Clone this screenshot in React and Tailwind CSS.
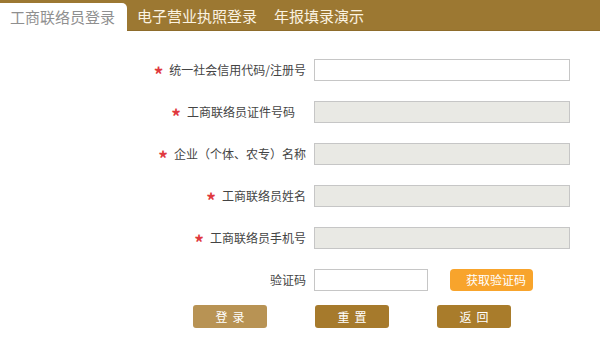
const fields = [
  { label: '统一社会信用代码/注册号', disabled: false, pad: '' },
  { label: '工商联络员证件号码', disabled: true, pad: 'pr-[11px]' },
  { label: '企业（个体、农专）名称', disabled: true, pad: '' },
  { label: '工商联络员姓名', disabled: true, pad: '' },
  { label: '工商联络员手机号', disabled: true, pad: '' },
]

const App = () => {
  return (
    <div className="w-[600px] h-[338px] bg-white overflow-hidden font-['Noto_Sans_CJK_SC','Noto_Sans',sans-serif]">
      {/* Tabs */}
      <div className="flex items-end h-[31px] bg-[#9c7832] border-b border-[#8e6c2b]">
        <div className="h-[28px] w-[127px] -mb-px bg-white rounded-tr-[5px] pl-[10px] text-[15px] leading-[28px] text-[#8f8f8f]">
          工商联络员登录
        </div>
        <div className="h-[28px] ml-[10px] text-[15px] leading-[28px] text-[#fbf3e2]">电子营业执照登录</div>
        <div className="h-[28px] ml-[17px] text-[15px] leading-[28px] text-[#fbf3e2]">年报填录演示</div>
      </div>

      {/* Form */}
      <div className="pt-[28px] grid grid-cols-[306px_256px] gap-x-2 gap-y-5 text-[12px] text-[#444]">
        {fields.map((f) => (
          <div key={f.label} className="contents">
            <div className={`flex items-center justify-end h-[22px] ${f.pad}`}>
              <span className="text-[#e0393e] text-[19px] font-bold mr-[6px] leading-none pt-[6px]">*</span>
              <span>{f.label}</span>
            </div>
            <div
              className={`h-[22px] border border-[#c6c6c6] ${f.disabled ? 'bg-[#e9e9e4]' : 'bg-white'}`}
            />
          </div>
        ))}
        <div className="flex items-center justify-end h-[22px]">验证码</div>
        <div className="flex items-center h-[22px]">
          <div className="w-[114px] h-[22px] border border-[#c6c6c6] bg-white" />
          <div className="ml-[22px] w-[83px] h-[22px] rounded-[4px] bg-[#f8a42c] text-white text-[12px] flex items-center justify-end pr-[7px]">
            获取验证码
          </div>
        </div>
      </div>

      {/* Buttons */}
      <div className="flex mt-[14px] pl-[193px] gap-[48px] text-[12px] text-white">
        <div className="w-[74px] h-[23px] rounded-[3px] bg-[#b89354] flex items-center justify-center tracking-[5px] pl-[5px]">登录</div>
        <div className="w-[74px] h-[23px] rounded-[3px] bg-[#a67a2c] flex items-center justify-center tracking-[5px] pl-[5px]">重置</div>
        <div className="w-[74px] h-[23px] rounded-[3px] bg-[#a97c2b] flex items-center justify-center tracking-[5px] pl-[5px]">返回</div>
      </div>
    </div>
  )
}

export default App
